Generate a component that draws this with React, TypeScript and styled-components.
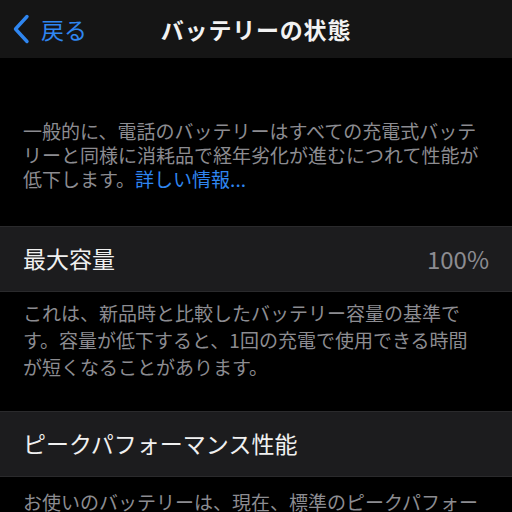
import styled, { createGlobalStyle } from "styled-components"

const GlobalStyle = createGlobalStyle`
  html, body {
    margin: 0;
    padding: 0;
    background: #000;
  }
  body {
    font-family: "Noto Sans CJK JP", "Noto Sans", sans-serif;
    -webkit-font-smoothing: antialiased;
  }
`;

const Screen = styled.div`
  width: 512px;
  height: 512px;
  overflow: hidden;
  background: #000;
  display: flex;
  flex-direction: column;
`;

const NavBar = styled.div`
  flex: 0 0 58px;
  background: #151515;
  display: grid;
  grid-template-columns: 1fr auto 1fr;
  align-items: center;
  padding: 0 12px;
  box-sizing: border-box;
`;

const BackButton = styled.div`
  display: flex;
  align-items: center;
  gap: 11px;
  color: #2f86f0;
  font-size: 23px;
  line-height: 1;
`;

const Title = styled.div`
  color: #f2f2f2;
  font-size: 23px;
  font-weight: 700;
  letter-spacing: 0.8px;
`;

const Footnote = styled.p<{ $top: number; $lh: number }>`
  margin: 0;
  padding: ${p => p.$top}px 23px 0;
  color: #8c8c91;
  font-size: 19px;
  line-height: ${p => p.$lh}px;
  white-space: nowrap;
`;

const Link = styled.span`
  color: #2f86f0;
`;

const Row = styled.div<{ $top: number }>`
  margin-top: ${p => p.$top}px;
  flex: 0 0 66px;
  box-sizing: border-box;
  background: #1c1c1e;
  border-top: 1px solid #2a2a2c;
  border-bottom: 1px solid #2a2a2c;
  display: flex;
  align-items: center;
  justify-content: space-between;
  padding: 0 23px 2px;
`;

const Label = styled.span`
  color: #f0f0f0;
  font-size: 23px;
`;

const Value = styled.span`
  color: #8c8c91;
  font-size: 24px;
`;

function Chevron() {
  return (
    <svg width="18" height="30" viewBox="0 0 18 30">
      <path d="M15 2.5 L3.5 15 L15 27.5" fill="none" stroke="#2f86f0" strokeWidth="3.4" strokeLinecap="round" strokeLinejoin="round" />
    </svg>
  )
}

export default function App() {
  return (
    <Screen>
      <GlobalStyle />
      <NavBar>
        <BackButton>
          <Chevron />
          <span>戻る</span>
        </BackButton>
        <Title>バッテリーの状態</Title>
        <div />
      </NavBar>
      <Footnote $top={61} $lh={24}>
        一般的に、電話のバッテリーはすべての充電式バッテ<br />
        リーと同様に消耗品で経年劣化が進むにつれて性能が<br />
        低下します。<Link>詳しい情報...</Link>
      </Footnote>
      <Row $top={35}>
        <Label>最大容量</Label>
        <Value>100%</Value>
      </Row>
      <Footnote $top={7} $lh={27}>
        これは、新品時と比較したバッテリー容量の基準で<br />
        す。容量が低下すると、1回の充電で使用できる時間<br />
        が短くなることがあります。
      </Footnote>
      <Row $top={31}>
        <Label>ピークパフォーマンス性能</Label>
      </Row>
      <Footnote $top={11} $lh={27}>
        お使いのバッテリーは、現在、標準のピークパフォー<br />
        マンスに対応しています。
      </Footnote>
    </Screen>
  )
}
